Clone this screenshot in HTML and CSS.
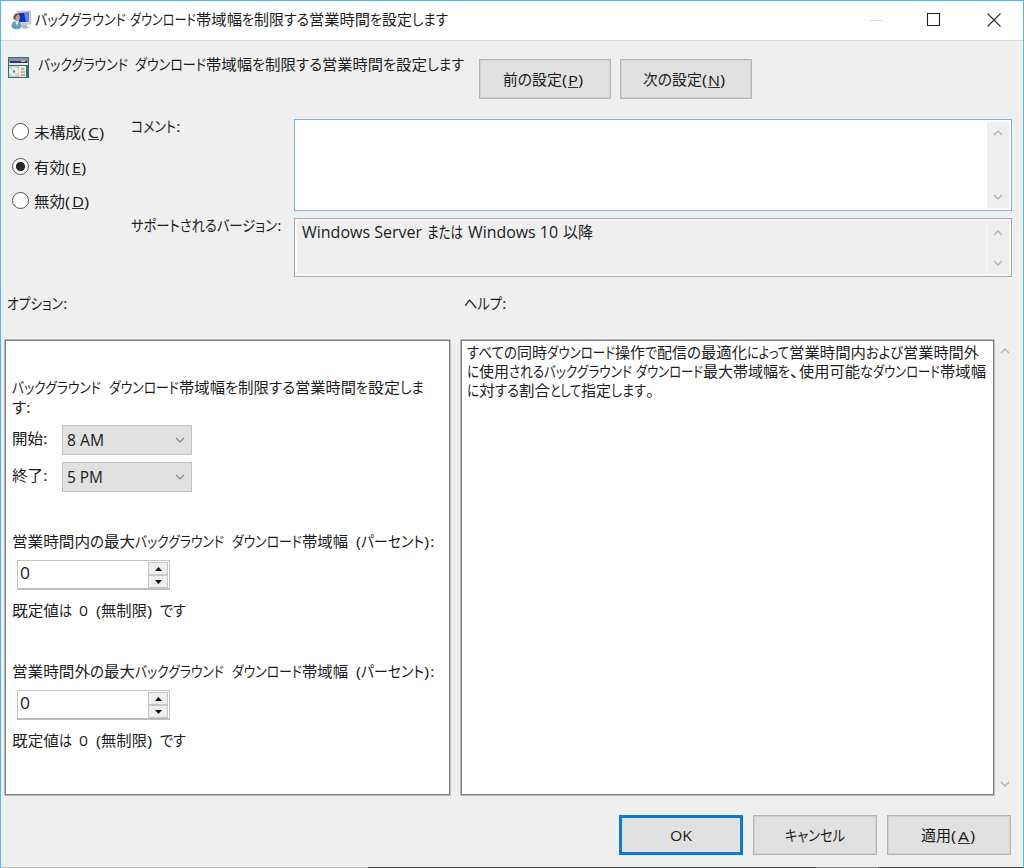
FILE: index.html
```html
<!DOCTYPE html>
<html lang="ja">
<head>
<meta charset="utf-8">
<title>バックグラウンド ダウンロード帯域幅を制限する営業時間を設定します</title>
<link rel="stylesheet" href="styles.css">
</head>
<body>
<div class="window">
  <header class="titlebar">
    <svg class="app-icon" width="21" height="20" viewBox="0 0 21 20">
      <path d="M6 1.5 19.5 1 20 14 7 14.5Z" fill="#d5d6cf" stroke="#aeb1ad" stroke-width=".7"/>
      <path d="M7.5 3 18 2.5V12H7.500Z" fill="#1230c8"/>
      <path d="M13 3 18 2.500V12H15Z" fill="#5d86ed"/>
      <path d="M12 14.500h4v2l3 1-5 1.500-4-2Z" fill="#b9bbb8"/>
      <path d="M.5 17c0-4 2-6 5-6s5 2 5 6c-2 3-8 3-10 0Z" fill="#5d9fc6"/>
      <path d="m4 11 2 5 2-5Z" fill="#d9ecf4"/>
      <ellipse cx="6" cy="7.500" rx="2.800" ry="3.800" fill="#c99f79"/>
      <path d="M2.500 9C2 4 5 2.500 8 4L5 6 4 10Z" fill="#685444"/>
    </svg>
    <div class="line"><span data-w="91">バックグラウンド</span><span data-w="4"> </span><span data-w="66">ダウンロード</span><span data-w="46">帯域幅</span><span data-w="12">を</span><span data-w="30">制限</span><span data-w="25">する</span><span data-w="61">営業時間</span><span data-w="12">を</span><span data-w="30">設定</span><span data-w="36">します</span></div>
    <div class="caption">
      <svg width="14" height="14" viewBox="0 0 14 14"><path d="M.5 7.500H13" stroke="#dedede"/></svg>
      <svg width="14" height="14" viewBox="1 0 14 14"><path d="M.5.500h12v12H.5Z" fill="none" stroke="#222" stroke-width="1.100"/></svg>
      <svg width="14" height="14" viewBox="0 0 14 14"><path d="m.5.500 13 13m0-13-13 13" stroke="#333" stroke-width="1.200"/></svg>
    </div>
  </header>

  <section class="heading">
    <svg class="policy-icon" width="21" height="21" viewBox="0 0 21 21">
      <path d="M0 0h21v21H0Z" fill="#2d7378"/>
      <path d="M1 1h19v5H1Z" fill="#8790a6"/>
      <path d="M2 4h17v2H2Z" fill="#263a91"/>
      <path d="M1 6h19v2H1Z" fill="#e9e6da"/>
      <path d="M13 3.500h4v1.500h-4Z" fill="#e3b659"/>
      <path d="M1 9h10v11H1Z" fill="#c9cbc5"/>
      <circle cx="6" cy="14.500" r="4.700" fill="#f0eef0"/>
      <path d="M6 14.500 2 12l2-2Zm0 0 4 3-2 2Z" fill="#cfdcd6"/>
      <circle cx="6" cy="14.500" r="1.200" fill="#77827d"/>
      <path d="M11 9h7v11h-7Z" fill="#f0ead5"/>
      <path d="M13 12h3m-3 3h4m-4 3h4" stroke="#8d7a68"/>
    </svg>
    <div class="line"><span data-w="90">バックグラウンド</span><span data-w="7"> </span><span data-w="71">ダウンロード</span><span data-w="46">帯域幅</span><span data-w="13">を</span><span data-w="31">制限</span><span data-w="26">する</span><span data-w="61">営業時間</span><span data-w="13">を</span><span data-w="31">設定</span><span data-w="37">します</span></div>
    <button class="btn nav"><span data-w="29">前の</span><span data-w="30">設定</span><span data-w="6">(</span><u data-w="10">P</u><span data-w="6">)</span></button>
    <button class="btn nav"><span data-w="29">次の</span><span data-w="30">設定</span><span data-w="6">(</span><u data-w="12">N</u><span data-w="6">)</span></button>
  </section>

  <section class="state">
    <div class="radios">
      <div class="radio"><i class="dot"></i><span data-w="47">未構成</span><span data-w="7">(</span><u data-w="11">C</u><span data-w="7">)</span></div>
      <div class="radio"><i class="dot on"></i><span data-w="31">有効</span><span data-w="7">(</span><u data-w="9">E</u><span data-w="7">)</span></div>
      <div class="radio"><i class="dot"></i><span data-w="31">無効</span><span data-w="7">(</span><u data-w="12">D</u><span data-w="7">)</span></div>
    </div>
    <div class="labels">
      <div class="line"><span data-w="45">コメント</span><span data-w="5">:</span></div>
      <div class="line"><span data-w="146">サポートされるバージョン</span><span data-w="5">:</span></div>
    </div>
    <div class="fields">
      <div class="box comment"><div class="scroll"><svg width="10" height="6"><path d="m1 5 4-4 4 4"/></svg><svg width="10" height="6"><path d="m1 1 4 4 4-4"/></svg></div></div>
      <div class="box support">
        <div class="line latin"><span data-w="120">Windows Server</span><span data-w="5"> </span><span data-w="36">または</span><span data-w="5"> </span><span data-w="90">Windows 10</span><span data-w="5"> </span><span data-w="30">以降</span></div>
        <div class="scroll"><svg width="10" height="6"><path d="m1 5 4-4 4 4"/></svg><svg width="10" height="6"><path d="m1 1 4 4 4-4"/></svg></div>
      </div>
    </div>
  </section>

  <section class="captions">
    <div class="line"><span data-w="56">オプション</span><span data-w="6">:</span></div>
    <div class="line"><span data-w="38">ヘルプ</span><span data-w="6">:</span></div>
  </section>

  <section class="panels">
    <div class="panel options">
      <div class="line"><span data-w="89">バックグラウンド</span><span data-w="8"> </span><span data-w="70">ダウンロード</span><span data-w="46">帯域幅</span><span data-w="13">を</span><span data-w="31">制限</span><span data-w="26">する</span><span data-w="61">営業時間</span><span data-w="12">を</span><span data-w="32">設定</span><span data-w="24">しま</span></div>
      <div class="line"><span data-w="14">す</span><span data-w="5">:</span></div>
      <div class="row first"><div class="line"><span data-w="31">開始</span><span data-w="6">:</span></div><div class="combo latin"><span data-w="37">8 AM</span><svg width="10" height="6"><path d="m1 1 4 4 4-4"/></svg></div></div>
      <div class="row"><div class="line"><span data-w="31">終了</span><span data-w="6">:</span></div><div class="combo latin"><span data-w="36">5 PM</span><svg width="10" height="6"><path d="m1 1 4 4 4-4"/></svg></div></div>
      <div class="group">
        <div class="line"><span data-w="78">営業時間内</span><span data-w="14">の</span><span data-w="31">最大</span><span data-w="89">バックグラウンド</span><span data-w="8"> </span><span data-w="70">ダウンロード</span><span data-w="46">帯域幅</span><span data-w="8"> </span><span data-w="5">(</span><span data-w="63">パーセント</span><span data-w="6">)</span><span data-w="5">:</span></div>
        <div class="spin latin"><span data-w="10">0</span><div class="arrows"><b><svg width="7" height="4"><path d="M0 4 3.500 0 7 4Z"/></svg></b><b><svg width="7" height="4"><path d="m0 0 3.500 4L7 0Z"/></svg></b></div></div>
        <div class="line"><span data-w="47">既定値</span><span data-w="13">は</span><span data-w="7"> </span><span data-w="9">0</span><span data-w="8"> </span><span data-w="5">(</span><span data-w="46">無制限</span><span data-w="7">)</span><span data-w="6"> </span><span data-w="26">です</span></div>
      </div>
      <div class="group">
        <div class="line"><span data-w="78">営業時間外</span><span data-w="14">の</span><span data-w="31">最大</span><span data-w="89">バックグラウンド</span><span data-w="8"> </span><span data-w="70">ダウンロード</span><span data-w="46">帯域幅</span><span data-w="8"> </span><span data-w="5">(</span><span data-w="63">パーセント</span><span data-w="6">)</span><span data-w="5">:</span></div>
        <div class="spin latin"><span data-w="10">0</span><div class="arrows"><b><svg width="7" height="4"><path d="M0 4 3.500 0 7 4Z"/></svg></b><b><svg width="7" height="4"><path d="m0 0 3.500 4L7 0Z"/></svg></b></div></div>
        <div class="line"><span data-w="47">既定値</span><span data-w="13">は</span><span data-w="7"> </span><span data-w="9">0</span><span data-w="8"> </span><span data-w="5">(</span><span data-w="46">無制限</span><span data-w="7">)</span><span data-w="6"> </span><span data-w="26">です</span></div>
      </div>
    </div>
    <div class="panel help">
      <div class="line"><span data-w="50">すべての</span><span data-w="30">同時</span><span data-w="68">ダウンロード</span><span data-w="30">操作</span><span data-w="12">で</span><span data-w="30">配信</span><span data-w="14">の</span><span data-w="46">最適化</span><span data-w="42">によって</span><span data-w="77">営業時間内</span><span data-w="37">および</span><span data-w="76">営業時間外</span></div>
      <div class="line"><span data-w="12">に</span><span data-w="30">使用</span><span data-w="35">される</span><span data-w="88">バックグラウンド</span><span data-w="4"> </span><span data-w="67">ダウンロード</span><span data-w="75">最大帯域幅</span><span data-w="12">を</span><span data-w="9">、</span><span data-w="61">使用可能</span><span data-w="13">な</span><span data-w="67">ダウンロード</span><span data-w="46">帯域幅</span></div>
      <div class="line"><span data-w="12">に</span><span data-w="16">対</span><span data-w="24">する</span><span data-w="31">割合</span><span data-w="31">として</span><span data-w="30">指定</span><span data-w="35">します</span><span data-w="8">。</span></div>
    </div>
    <div class="scroll outer"><svg width="10" height="6"><path d="m1 5 4-4 4 4"/></svg><svg width="10" height="6"><path d="m1 1 4 4 4-4"/></svg></div>
  </section>

  <footer class="actions">
    <button class="btn ok"><span data-w="22">OK</span></button>
    <button class="btn"><span data-w="60">キャンセル</span></button>
    <button class="btn"><span data-w="30">適用</span><span data-w="7">(</span><u data-w="12">A</u><span data-w="7">)</span></button>
  </footer>
  <div class="edge"></div>
</div>
<script src="fit.js"></script>
</body>
</html>
```

FILE: styles.css
```css
* { box-sizing: border-box; }
body {
  margin: 0;
  font: 15.2px/20px "Open Sans", "Noto Sans CJK JP", sans-serif;
  color: #1c1c1c;
}
.window {
  width: 1024px;
  height: 868px;
  display: flex;
  flex-direction: column;
  background: #efefef;
  border: solid #58b4f0;
  border-width: 1px 1px 0;
  overflow: hidden;
}
svg { display: block; flex: none; overflow: visible; }

/* Text runs condensed to UI-font widths */
.line { display: flex; height: 20px; line-height: 19px; white-space: pre; }
[data-w] {
  display: block;
  flex: none;
  height: 20px;
  white-space: pre;
  text-align: left;
  text-decoration: none;
  font-feature-settings: "palt";
}
u[data-w] { height: 18px; border-bottom: 1px solid #333; }
.latin { font-size: 15.800px; }
.glyphs { display: inline-block; vertical-align: top; transform-origin: 0 50%; }

.titlebar {
  display: flex;
  height: 40px;
  padding: 9px 22px 0 10px;
  background: #fff;
  border-bottom: 1px solid #dcdcdc;
}
.titlebar .line { margin-left: 3px; }
.caption { display: flex; gap: 45px; margin: 3px 0 0 auto; }

.heading { display: flex; height: 78px; padding: 14px 0 0 7px; }
.policy-icon { margin-top: 2px; }
.heading .line { flex: none; width: 450px; padding-left: 9px; }
.btn {
  display: flex;
  align-items: center;
  justify-content: center;
  width: 124px;
  height: 40px;
  padding: 0;
  font: inherit;
  line-height: 20px;
  color: inherit;
  background: #e1e1e1;
  border: 1px solid #b5b5b5;
  box-shadow: inset 0 0 0 1px #d2d2d2;
}
.btn.nav { width: 132px; margin: 4px 9px 0 0; padding-right: 3px; }

.state { display: flex; height: 158px; padding-left: 11px; }
.radios { width: 119px; padding-top: 3px; line-height: 20px; }
.radio { display: flex; height: 20px; margin-bottom: 14.5px; }
.dot {
  width: 17px;
  height: 17px;
  margin: 1px 5px 0 0;
  border: 1.5px solid #555;
  border-radius: 50%;
  background: #fff;
}
.dot.on { background: radial-gradient(circle, #292929 0 4.200px, #fff 4.900px); }
.labels { display: flex; flex-direction: column; gap: 79px; width: 163px; margin-top: -2px; }
.fields { display: flex; flex-direction: column; gap: 7px; }
.box { display: flex; justify-content: space-between; width: 718px; padding: 2px 1px; }
.comment { justify-content: flex-end; height: 92px; background: #fff; border: 1px solid #77b5e6; }
.support { height: 59px; border: 1px solid #aaa; box-shadow: inset 0 0 0 2px #fafafa; }
.support .line { padding: 1px 0 0 6px; margin-top: 1px; }
.scroll {
  display: flex;
  flex-direction: column;
  justify-content: space-between;
  align-items: center;
  width: 22px;
  padding: 8px 0 8px;
  background: #efefef;
}
.box .scroll { margin-right: 1px; }
.support .scroll { width: 23px; padding: 9px 0 8px; border-left: 1px solid #f9f9f9; }
.scroll path, .combo path { fill: none; stroke: #b6b6b6; stroke-width: 1.500; }
.captions { display: grid; grid-template-columns: 457px 1fr; height: 62px; padding: 17px 0 0 6px; }

.panels { display: flex; height: 457px; padding-left: 3px; }
.panel { height: 457px; background: #fff; border: 1px solid #b9b9b9; box-shadow: inset 0 0 0 1px #7e7e7e; }
.options { width: 447px; padding: 38px 0 0 7px; }
.help { width: 535px; margin-left: 9px; padding: 3px 0 0 6px; }
.help .line { height: 19px; }
.scroll.outer { width: 20px; padding: 9px 0; }
.options > .line { height: 19.500px; }
.row { display: flex; gap: 13px; height: 30px; margin-bottom: 7px; }
.row.first { margin-top: 8px; }
.row .line { margin-top: 4px; }
.combo {
  display: flex;
  align-items: center;
  justify-content: space-between;
  width: 130px;
  height: 30px;
  padding: 0 6px 0 4px;
  background: #e1e1e1;
  border: 1px solid #c2c2c2;
}
.combo path { stroke: #858585; stroke-width: 1.200; }
.group { padding-top: 33px; height: 130px; }
.spin {
  display: flex;
  justify-content: space-between;
  width: 153px;
  height: 30px;
  margin: 8px 0 11px 5px;
  padding: 2px 1px 1px 2px;
  border: 1px solid #c4c6ca;
  border-bottom: 2px solid #b9bcc1;
}
.arrows { display: flex; flex-direction: column; width: 20px; height: 26px; margin-top: -1px; }
.arrows b { display: grid; place-items: center; flex: 1; background: #eee; border: 1px solid #c8c8c8; }
.arrows path { fill: #111; }

.actions { display: flex; gap: 10px; height: 71px; padding: 19px 0 0 618px; }
.ok { border: 3px solid #0a7bd8; box-shadow: none; }
.edge {
  flex: none;
  height: 1px;
  background: linear-gradient(90deg, #bdbdbd 367px, #444 367px 815px, #858585 815px 877px, #444 877px);
}
```

FILE: fit.js
```javascript
document.querySelectorAll("[data-w]").forEach((run) => {
  const width = Number(run.dataset.w);
  const glyphs = document.createElement("span");
  glyphs.className = "glyphs";
  glyphs.textContent = run.textContent;
  run.replaceChildren(glyphs);
  const natural = glyphs.getBoundingClientRect().width;
  run.style.width = width + "px";
  if (natural > 0) glyphs.style.transform = "scaleX(" + Math.min(1.15, width / natural) + ")";
});
```
